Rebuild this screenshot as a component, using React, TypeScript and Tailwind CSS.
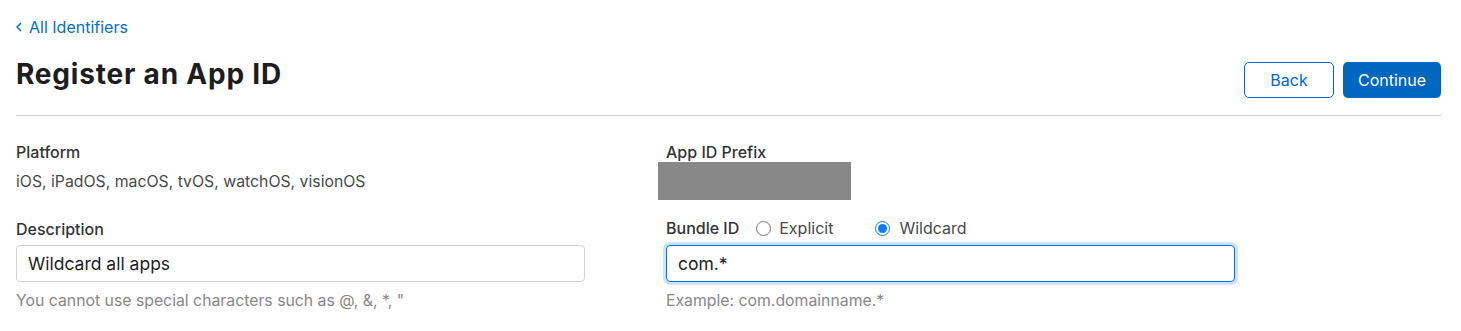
import React, { useEffect, useRef, useState } from 'react';

const App: React.FC = () => {
  const [bundleType, setBundleType] = useState<'explicit' | 'wildcard'>('wildcard');
  const [description, setDescription] = useState('Wildcard all apps');
  const [bundleId, setBundleId] = useState('com.*');
  const bundleRef = useRef<HTMLInputElement>(null);

  useEffect(() => {
    const el = bundleRef.current;
    if (el) {
      el.focus();
      el.setSelectionRange(el.value.length, el.value.length);
    }
  }, []);

  return (
    <div className="min-h-[331px] bg-white pl-4 pr-5 font-['Inter',sans-serif] text-[#1d1d1f]">
      <div className="flex pt-[17px]">
        <a href="#" className="flex items-center gap-[7px] text-[16px] leading-5 text-[#0070c9]">
          <svg width="6" height="10" viewBox="0 0 6 10" fill="none" stroke="currentColor" strokeWidth="1.5">
            <path d="M5 1 1 5l4 4" />
          </svg>
          All Identifiers
        </a>
      </div>

      <div className="mt-[21px] flex items-start justify-between border-b border-[#d2d2d7] pb-[17px]">
        <h1 className="text-[28px] font-bold leading-8 tracking-[0.8px] text-[#1d1d1f]">Register an App ID</h1>
        <div className="mt-1 flex gap-[9px]">
          <button className="h-9 w-[90px] rounded-[5px] border border-[#0066cc] bg-white text-[16px] text-[#0066cc]">
            Back
          </button>
          <button className="h-9 w-[98px] rounded-[5px] bg-[#0066c0] text-[16px] text-white">
            Continue
          </button>
        </div>
      </div>

      <div className="mt-[26px] flex">
        <div className="w-[650px]">
          <div className="text-[16px] font-medium leading-5 text-[#333336]">Platform</div>
          <div className="mt-[10px] text-[15.8px] leading-5 text-[#494949]">
            iOS, iPadOS, macOS, tvOS, watchOS, visionOS
          </div>

          <div className="mt-[27px] text-[16px] font-medium leading-5 text-[#333336]">Description</div>
          <input
            value={description}
            onChange={(e) => setDescription(e.target.value)}
            className="mt-[6px] h-[37px] w-[569px] rounded-[4px] border border-[#d2d2d7] px-[11px] text-[17.5px] text-[#1d1d1f] outline-none"
          />
          <div className="mt-[9px] text-[15.8px] leading-5 text-[#888888]">
            You cannot use special characters such as @, &amp;, *, "
          </div>
        </div>

        <div className="flex-1">
          <div className="text-[16px] font-medium leading-5 text-[#333336]">App ID Prefix</div>
          <div className="-ml-2 h-[38px] w-[193px] bg-[#888888]" />

          <div className="mt-[18px] flex items-center text-[16px] leading-5">
            <span className="font-medium text-[#333336]">Bundle ID</span>
            <label className="ml-[17px] flex items-center gap-[8px] text-[#494949]">
              <input
                type="radio"
                name="bundle"
                checked={bundleType === 'explicit'}
                onChange={() => setBundleType('explicit')}
                className="m-0 h-[15px] w-[15px] accent-[#0a7aff]"
              />
              Explicit
            </label>
            <label className="ml-[42px] flex items-center gap-[9px] text-[#494949]">
              <input
                type="radio"
                name="bundle"
                checked={bundleType === 'wildcard'}
                onChange={() => setBundleType('wildcard')}
                className="m-0 h-[15px] w-[15px] accent-[#0a7aff]"
              />
              Wildcard
            </label>
          </div>
          <input
            ref={bundleRef}
            value={bundleId}
            onChange={(e) => setBundleId(e.target.value)}
            className="mt-[7px] h-[37px] w-[569px] rounded-[4px] border border-[#0071e3] px-[11px] text-[17.5px] text-[#1d1d1f] shadow-[0_0_0_3px_rgba(0,113,227,0.2)] outline-none"
          />
          <div className="mt-[9px] text-[15.8px] leading-5 text-[#888888]">Example: com.domainname.*</div>
        </div>
      </div>
    </div>
  );
};

export default App;
